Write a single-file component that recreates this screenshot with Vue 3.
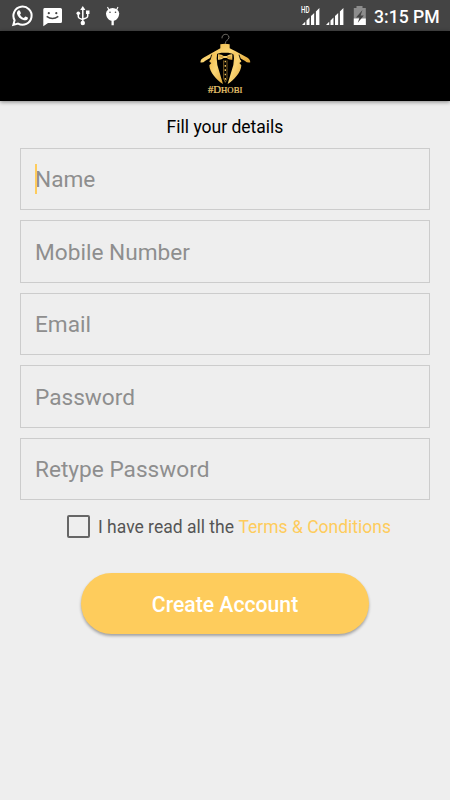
<script setup>
import { ref } from 'vue'

const fields = ref(['Name', 'Mobile Number', 'Email', 'Password', 'Retype Password'])
</script>

<template>
  <main class="screen">
    <header class="status">
      <svg class="notifications" viewBox="0 0 140 31" width="140" height="31">
        <path d="M13.300 24.900l1.300-4.700a9.100 9.100 0 1 1 3.400 3.400z" fill="none" stroke="#fff" stroke-width="2" />
        <path fill="#fff" d="M18.100 10.800c.7-.7 1.500-.6 1.900.2l.9 2c.1.6-.5 1.100-.9 1.600.9 1.700 2.100 2.800 3.800 3.500l1.300-1.400c.4-.4.8-.2 2.200.5.8.4.7.6.5 1.500-.5 1.400-2.300 1.900-3.800 1.500-3.800-1-6.300-3.600-7-6.500-.2-1.200.3-2.200 1.100-2.900z" />
        <path fill="#fff" d="M44.500 8h16q1.500 0 1.500 1.500v12q0 1.500-1.500 1.500H48l-4.700 3.300V9.500Q43.200 8 44.500 8z" />
        <circle cx="48.800" cy="13.200" r="1.100" fill="#444" />
        <circle cx="56.300" cy="13.200" r="1.100" fill="#444" />
        <path d="M46.700 16.300q5.800 4.300 11.600 0" fill="none" stroke="#444" stroke-width="1.500" />
        <path d="M82.800 22V9M78.300 14v2.500q0 1.300 1.400 1.900l3.100 1.200M87.700 13v3q0 1.300-1.400 1.900l-3.500 1.400" fill="none" stroke="#fff" stroke-width="1.500" />
        <g fill="#fff">
          <path d="M82.800 6l2.600 4h-5.200z" />
          <circle cx="82.800" cy="23" r="2.200" />
          <circle cx="78.300" cy="13.200" r="1.800" />
          <path d="M86 10.500h3.500V14H86z" />
          <path d="M106 13h13.200c0 4.200-2.500 7.200-5.400 7.700v4.600h-2.300v-4.600c-2.900-.5-5.500-3.500-5.500-7.700z" />
          <path d="M106 13.500a6.600 5.400 0 0 1 13.200 0z" />
        </g>
        <path d="M109 10l-1.500-3M116.500 10l1.500-3" stroke="#fff" stroke-width="1.100" />
        <circle cx="110" cy="12.300" r=".8" fill="#444" />
        <circle cx="115.500" cy="12.300" r=".8" fill="#444" />
      </svg>
      <div class="system">
        <svg viewBox="300 0 70 31" width="70" height="31">
          <text x="301" y="13" class="hd" textLength="8.500" lengthAdjust="spacingAndGlyphs">HD</text>
          <g fill="#fff">
            <path d="M302 25l3.200-3.200V25zM306.500 20.500l3-3V25h-3zM311 16l3.200-3v12H311zM315.900 11.500l3.500-3.500v17h-3.500z" />
            <path d="M326 25l3.200-3.200V25zM330.500 20.500l3-3V25h-3zM335 16l3.200-3v12H335zM339.900 11.500l3.500-3.500v17h-3.500z" />
          </g>
          <path d="M356.500 6h6v2h3.300v17h-12V8h2.700z" fill="#8c8c8c" />
          <path d="M353.800 18.500h12V25h-12z" fill="#fff" />
          <path d="M362.500 10l-6.500 7.500h3.500l-1.700 5.200 6-7.200h-3.200z" fill="#444" />
        </svg>
        <span class="clock">3:15 PM</span>
      </div>
    </header>

    <div class="brand">
      <svg viewBox="0 9 210 210" width="70" height="70">
        <defs>
          <linearGradient id="gold" x1="0" x2="1" y1="0" y2="1">
            <stop offset="0" stop-color="#ecb444" />
            <stop offset=".5" stop-color="#fbd675" />
            <stop offset="1" stop-color="#e3a938" />
          </linearGradient>
        </defs>
        <path d="M96 31c-1-15 20-16 21-3 0 8-11 8-11 19" fill="none" stroke="#77746d" stroke-width="3" />
        <g fill="url(#gold)">
          <path d="M91 49q14-4 28 0v12l18 9 37 20q7 5 7 13-8 3-17-5l-37-21-12-3H94l-12 3-36 21q-8 8-15 5 0-9 8-13l36-20 16-9z" />
          <path d="M66 78l16-7-2 20 2 20 7 23 10 34C81 158 58 132 58 112l6-7-6-4z" />
          <path d="M146 78l-16-7 2 20-2 20-7 23-10 34c18-10 41-36 41-56l-6-7 6-4z" />
          <path d="M84 79q10-1 17 5h9q8-6 17-5v16q-11 1-17-5h-9q-7 6-17 5z" />
        </g>
        <path d="M65 80l-5 16M147 80l5 16" stroke="#000" stroke-width="2.500" />
        <path d="M87 84l13 3-13 4M124 84l-13 3 13 4" fill="none" stroke="#a77520" stroke-width="1.500" />
        <path d="M101 97v55l5 11 5-11V97" fill="none" stroke="#b58a36" stroke-width="2" />
        <path d="M106 98v58" stroke="#edc25c" stroke-width="4" stroke-dasharray="5 8" />
        <text x="54" y="195" class="mark" textLength="103" lengthAdjust="spacingAndGlyphs">#D<tspan class="caps">HOBI</tspan></text>
      </svg>
    </div>

    <form class="form" @submit.prevent>
      <h1>Fill your details</h1>
      <div class="fields">
        <div v-for="(field, index) in fields" :key="field" class="field">
          <i v-if="index === 0" class="caret"></i>
          <span>{{ field }}</span>
        </div>
      </div>
      <div class="terms">
        <span class="box"></span>
        <span class="agree">I have read all the</span>
        <a>Terms &amp; Conditions</a>
      </div>
      <button type="submit">Create Account</button>
    </form>
  </main>
</template>

<style>
body {
  margin: 0;
  background: #eee;
}
</style>

<style scoped>
.screen {
  width: 450px;
  height: 800px;
  overflow: hidden;
  background: #eee;
  font-family: Roboto, sans-serif;
}
.status {
  display: flex;
  justify-content: space-between;
  height: 31px;
  background: #444;
}
.system {
  display: flex;
  align-items: center;
  width: 150px;
}
.system svg {
  flex: none;
}
.hd {
  font: 500 9px Roboto, sans-serif;
  fill: #fff;
}
.clock {
  margin: 2px 0 0 4px;
  color: #fff;
  font-size: 17.600px;
  font-weight: 500;
  white-space: nowrap;
}
.brand {
  display: flex;
  justify-content: center;
  height: 70px;
  background: #000;
  box-shadow: 0 1px 4px rgba(0, 0, 0, 0.45);
}
.mark {
  font: 32px "Liberation Serif", serif;
  fill: #f0cd75;
  stroke: #f0cd75;
  stroke-width: 0.7px;
}
.caps {
  font-size: 26px;
}
.form {
  display: flex;
  flex-direction: column;
  align-items: center;
}
h1 {
  margin: 16px 0 10.500px;
  color: #000;
  font-size: 17.500px;
  font-weight: 400;
  line-height: 20px;
}
.fields {
  display: grid;
  gap: 10px;
  width: 410px;
}
.field {
  display: flex;
  align-items: center;
  box-sizing: border-box;
  position: relative;
  height: 62.500px;
  padding: 2px 14px 0;
  border: 1px solid #ccc;
  color: #8e8e8e;
  font-size: 22.650px;
}
.caret {
  position: absolute;
  left: 14px;
  top: 15px;
  width: 2px;
  height: 30px;
  background: #fecc5c;
}
.terms {
  display: flex;
  align-items: center;
  height: 24px;
  margin: 14px 0 0 8px;
  font-size: 17.500px;
  white-space: nowrap;
}
.agree,
.terms a {
  padding-top: 2px;
}
.box {
  box-sizing: border-box;
  width: 23px;
  height: 23px;
  margin-right: 8px;
  border: 2.500px solid #666;
  border-radius: 2px;
}
.agree {
  margin-right: 4.500px;
  color: #555;
}
a {
  color: #fecc5c;
}
button {
  width: 288px;
  height: 61px;
  margin-top: 35px;
  padding: 2px 0 0;
  border: 0;
  border-radius: 31px;
  background: #fecc5c;
  box-shadow: 0 2px 3px rgba(0, 0, 0, 0.32);
  color: #fff;
  font: 500 21.200px Roboto, sans-serif;
}
</style>
